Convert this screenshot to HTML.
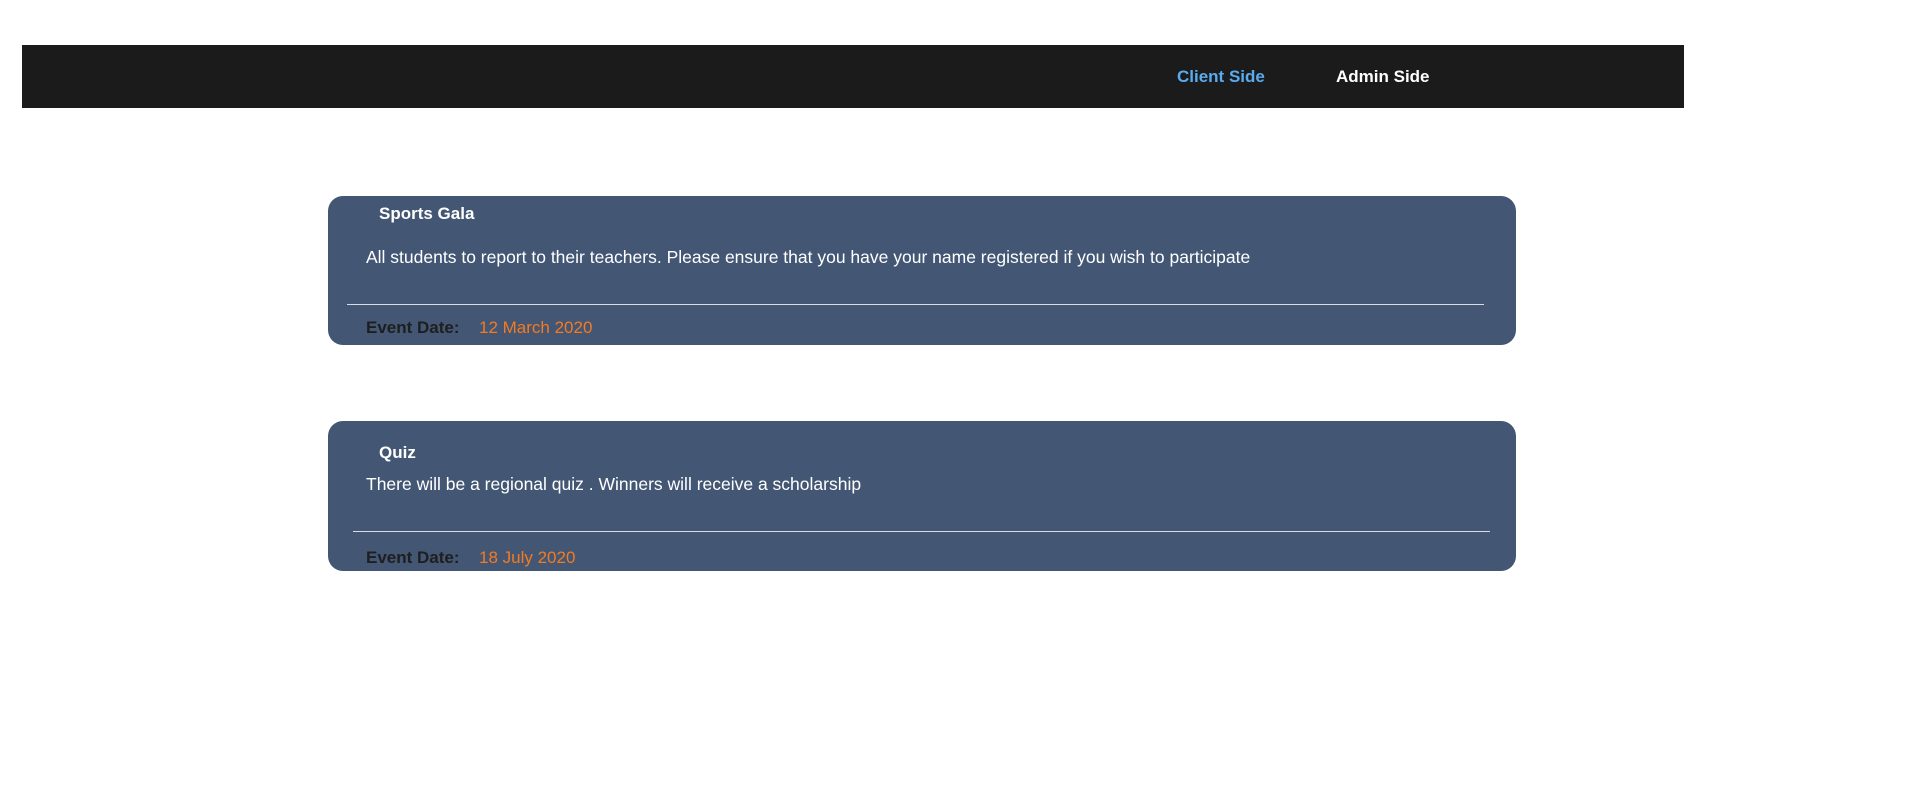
<!DOCTYPE html>
<html><head><style>
body{margin:0;width:1920px;height:798px;background:#fff;font-family:"Liberation Sans",Arial,sans-serif;position:relative;overflow:hidden}
.nav{position:absolute;left:22px;top:45px;width:1662px;height:63px;background:#1b1b1b}
.a{position:absolute;font-weight:bold;font-size:17px;line-height:20px}
.card{position:absolute;left:328px;width:1188px;background:#435775;border-radius:15px}
.t{position:absolute;white-space:nowrap;line-height:20px}
.ln{position:absolute;height:1px;background:#d8dde5}
</style></head><body>
<div class="nav"></div>
<div class="a" style="left:1177px;top:67px;color:#5aabf0">Client Side</div>
<div class="a" style="left:1336px;top:67px;color:#fff">Admin Side</div>

<div class="card" style="top:196px;height:149px"></div>
<div class="t" style="left:379px;top:204px;color:#fff;font-weight:bold;font-size:17px">Sports Gala</div>
<div class="t" style="left:366px;top:247px;color:#fff;font-size:17.5px">All students to report to their teachers. Please ensure that you have your name registered if you wish to participate</div>
<div class="ln" style="left:347px;top:304px;width:1137px"></div>
<div class="t" style="left:366px;top:318px;color:#1e1e1e;font-weight:bold;font-size:17px">Event Date:</div>
<div class="t" style="left:479px;top:318px;color:#f47a20;font-size:17px">12 March 2020</div>

<div class="card" style="top:421px;height:150px"></div>
<div class="t" style="left:379px;top:443px;color:#fff;font-weight:bold;font-size:17px">Quiz</div>
<div class="t" style="left:366px;top:474px;color:#fff;font-size:17.5px">There will be a regional quiz . Winners will receive a scholarship</div>
<div class="ln" style="left:353px;top:531px;width:1137px"></div>
<div class="t" style="left:366px;top:548px;color:#1e1e1e;font-weight:bold;font-size:17px">Event Date:</div>
<div class="t" style="left:479px;top:548px;color:#f47a20;font-size:17px">18 July 2020</div>
</body></html>
